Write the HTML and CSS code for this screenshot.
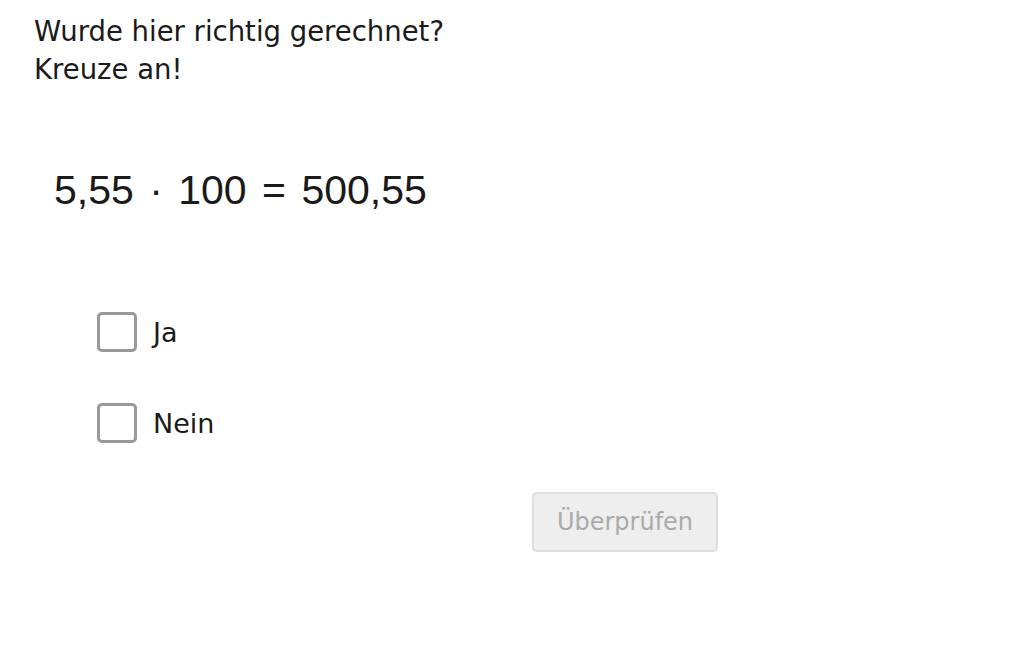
FILE: index.html
```html
<!DOCTYPE html>
<html lang="de">
<head>
    <meta charset="UTF-8">
    <title>Aufgabe</title>
    <link rel="stylesheet" href="styles.css">
</head>
<body>

<div class="task">
    <p class="question">Wurde hier richtig gerechnet?<br>Kreuze an!</p>

    <div class="formula">5,55 <span class="op">&middot;</span> 100 <span class="op">=</span> 500,55</div>

    <div class="choices">
        <label class="choice"><span class="box"></span>Ja</label>
        <label class="choice"><span class="box"></span>Nein</label>
    </div>

    <div class="actions">
        <button type="button" class="check" disabled>Überprüfen</button>
    </div>
</div>

</body>
</html>
```

FILE: styles.css
```css
body {
    margin: 0;
    background: #fff;
    color: #1a1a1a;
    font-family: "DejaVu Sans", "Liberation Sans", sans-serif;
}

.task {
    padding: 12px 0 0 34px;
}

.question {
    margin: 0;
    font-size: 27.5px;
    line-height: 38px;
}

.formula {
    margin: 78px 0 0 20px;
    font-family: "Liberation Sans", sans-serif;
    font-size: 41px;
    line-height: 48px;
}

.formula .op {
    margin: 0 4px;
}

.choices {
    margin: 98px 0 0 63px;
    display: flex;
    flex-direction: column;
    gap: 51px;
}

.choice {
    display: flex;
    align-items: center;
    gap: 16px;
    font-size: 27px;
}

.box {
    width: 34px;
    height: 34px;
    border: 3px solid #999;
    border-radius: 5px;
}

.actions {
    margin: 49px 0 0 498px;
}

.check {
    width: 186px;
    height: 60px;
    background: #eee;
    border: 2px solid #ddd;
    border-radius: 5px;
    color: #aaa;
    font-family: inherit;
    font-size: 24px;
}
```
